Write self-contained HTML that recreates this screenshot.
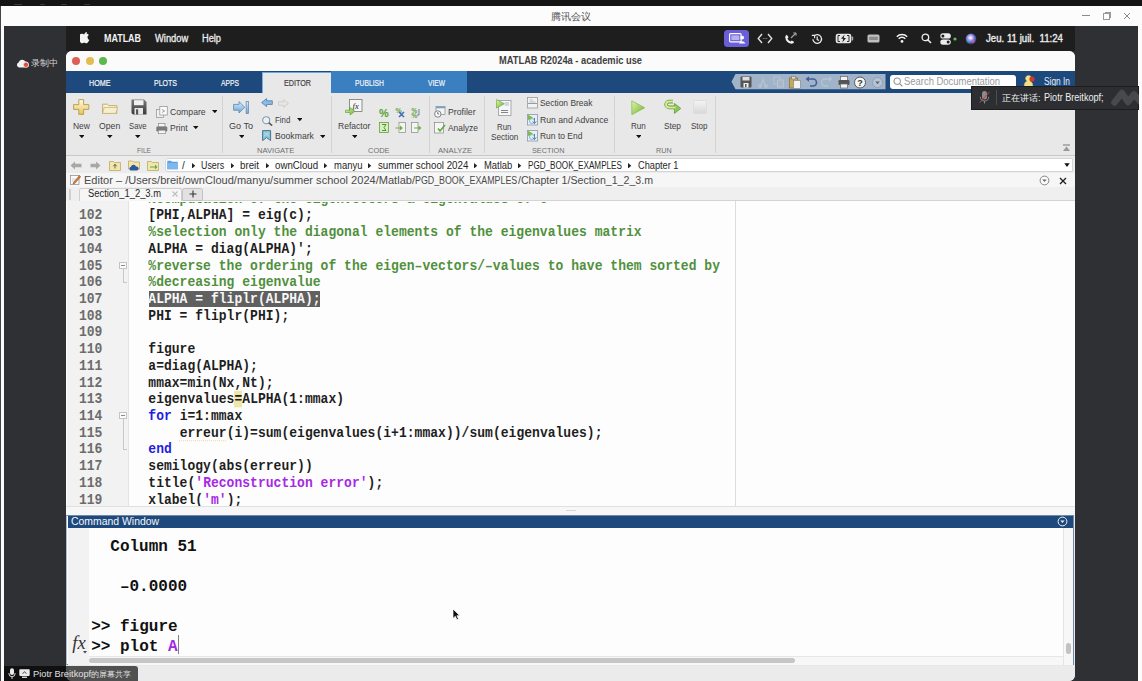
<!DOCTYPE html><html><head><meta charset="utf-8"><style>
*{margin:0;padding:0;box-sizing:border-box}
html,body{width:1142px;height:681px;overflow:hidden;background:#141414;position:relative}
.a{position:absolute}
</style></head><body><div class="a" style="left:0px;top:5.5px;width:1142px;height:675.5px;background:#fcfcfc;"></div>
<div class="a" style="left:0px;top:6px;width:1px;height:675px;background:#444;"></div>
<div class="a" style="left:14px;top:4.2px;width:8px;height:1.2px;background:#3a3a3a;border-radius:1px"></div>
<div class="a" style="left:40px;top:4.2px;width:5px;height:1.2px;background:#3a3a3a;border-radius:1px"></div>
<div class="a" style="left:61px;top:4.2px;width:6px;height:1.2px;background:#3a3a3a;border-radius:1px"></div>
<div class="a" style="left:84px;top:4.2px;width:6px;height:1.2px;background:#3a3a3a;border-radius:1px"></div>
<div class="a" style="left:550.50px;top:10.53px;font-family:'Liberation Sans',sans-serif;font-weight:normal;font-size:10px;line-height:12.00px;color:#555;white-space:pre;">腾讯会议</div>
<div class="a" style="left:1082px;top:15px;width:7.5px;height:1px;background:#8a8a8a;"></div>
<div class="a" style="left:1102.5px;top:13px;width:7px;height:6.5px;border:1px solid #999;background:#fcfcfc"></div>
<div class="a" style="left:1104.5px;top:11.5px;width:6.5px;height:6px;border-top:1px solid #999;border-right:1px solid #999"></div>
<svg class="a" style="left:1123px;top:12px;" width="8" height="8" viewBox="0 0 8 8"><path d="M1 1L7 7M7 1L1 7" stroke="#8a8a8a" stroke-width="1"/></svg>
<div class="a" style="left:4px;top:26.2px;width:1134px;height:654.8px;background:#2f3034;"></div>
<svg class="a" style="left:16px;top:58px;" width="14" height="11" viewBox="0 0 14 11"><path d="M3.2 9.6 A2.6 2.6 0 0 1 2.6 4.6 A3.6 3.6 0 0 1 9.3 3.6 A2.8 2.8 0 0 1 10.5 9.6Z" fill="#f4f4f4"/><circle cx="10" cy="6.8" r="2.5" fill="#e04a3c" stroke="#f4f4f4" stroke-width=".5"/></svg>
<div class="a" style="left:31.20px;top:58.37px;font-family:'Liberation Sans',sans-serif;font-weight:normal;font-size:8.9px;line-height:10.68px;color:#d4d4d4;white-space:pre;">录制中</div>
<div class="a" style="left:66px;top:26.2px;width:1009px;height:24.8px;background:#1e1e1e;"></div>
<svg class="a" style="left:80px;top:32.3px;" width="10" height="11.5" viewBox="0 0 10 11.5"><path d="M6.9 0.1c0.1 0.8-0.3 1.6-0.7 2.1-0.5 0.6-1.2 1-1.9 0.9-0.1-0.8 0.3-1.6 0.7-2.1 0.5-0.5 1.3-0.9 1.9-0.9zM9.3 8c-0.3 0.6-0.4 0.9-0.8 1.5-0.5 0.8-1.3 1.8-2.2 1.8-0.8 0-1-0.5-2.1-0.5-1.1 0-1.3 0.5-2.2 0.5-0.9 0-1.6-0.9-2.1-1.7-1.5-2.2-1.6-4.9-0.7-6.3 0.6-1 1.6-1.6 2.6-1.6 1 0 1.6 0.5 2.4 0.5 0.8 0 1.3-0.5 2.4-0.5 0.8 0 1.7 0.5 2.3 1.2-2 1.1-1.7 4 0.4 5.1z" fill="#f4f4f4"/></svg>
<div class="a" style="left:104.00px;top:33.13px;font-family:'Liberation Sans',sans-serif;font-weight:bold;font-size:10px;line-height:12.00px;color:#f2f2f2;white-space:pre;transform:scaleX(0.8922);transform-origin:0 0;">MATLAB</div>
<div class="a" style="left:155.00px;top:33.13px;font-family:'Liberation Sans',sans-serif;font-weight:normal;font-size:10px;line-height:12.00px;color:#ececec;white-space:pre;transform:scaleX(0.9334);transform-origin:0 0;-webkit-text-stroke:0.3px #ececec">Window</div>
<div class="a" style="left:202.40px;top:33.13px;font-family:'Liberation Sans',sans-serif;font-weight:normal;font-size:10px;line-height:12.00px;color:#ececec;white-space:pre;transform:scaleX(0.9238);transform-origin:0 0;-webkit-text-stroke:0.3px #ececec">Help</div>
<div class="a" style="left:723.7px;top:30px;width:25px;height:16.5px;background:#6a5fd8;border-radius:3.5px"></div>
<svg class="a" style="left:728.5px;top:33px;" width="17" height="11" viewBox="0 0 17 11"><rect x="0.6" y="0.6" width="11.5" height="8.3" rx="1" fill="none" stroke="#fff" stroke-width="1.2"/><rect x="2.4" y="2.4" width="7.9" height="4.7" fill="#b9b2f0"/><circle cx="13.2" cy="4.6" r="1.9" fill="#fff"/><path d="M9.8 10.6 Q13.2 5.8 16.6 10.6Z" fill="#fff"/></svg>
<svg class="a" style="left:756.5px;top:33px;" width="16" height="11" viewBox="0 0 16 11"><path d="M5 1L1.2 5.5L5 10M11 1L14.8 5.5L11 10" stroke="#e6e6e6" stroke-width="1.3" fill="none"/><circle cx="6.3" cy="5.5" r=".55" fill="#999"/><circle cx="8" cy="5.5" r=".55" fill="#999"/><circle cx="9.7" cy="5.5" r=".55" fill="#999"/></svg>
<svg class="a" style="left:784px;top:32px;" width="13" height="13" viewBox="0 0 13 13"><path d="M1.2 5.6 Q1.3 3.3 2.8 2.7 L4.6 5.2 L3.4 6.4 Q4.5 8.8 6.6 9.6 L7.8 8.4 L10.2 10.1 Q9.7 11.8 7.3 11.8 Q2 10.8 1.2 5.6Z" fill="#f0f0f0"/><path d="M7 6 L12 1" stroke="#a8a8a8" stroke-width="1.1"/><path d="M9.3 1H12V3.7" stroke="#a8a8a8" stroke-width="1" fill="none"/></svg>
<svg class="a" style="left:810.5px;top:32.5px;" width="12" height="12" viewBox="0 0 12 12"><path d="M1.9 6.2 A4.3 4.3 0 1 0 3.1 3" stroke="#ececec" stroke-width="1.3" fill="none"/><path d="M0.8 2.4 L3.6 2.4 L3.6 5.2" stroke="#ececec" stroke-width="1.1" fill="none"/><path d="M6.2 3.6 V6.6 L8 7.6" stroke="#ececec" stroke-width="1.2" fill="none"/></svg>
<svg class="a" style="left:834.5px;top:33px;" width="19" height="11" viewBox="0 0 19 11"><rect x="0.7" y="0.7" width="15.6" height="9.6" rx="2.2" fill="#e6e6e6"/><rect x="16.6" y="3.6" width="1.6" height="3.8" rx=".6" fill="#aaa"/><path d="M5 2.5 H3 V8.5 H5 M12 2.5 H14 V8.5 H12" stroke="#1e1e1e" stroke-width=".9" fill="none"/><path d="M9.6 1.6 L6 5.8 L8.3 5.8 L7.3 9.4 L11 5 L8.7 5Z" fill="#1e1e1e"/></svg>
<svg class="a" style="left:866.8px;top:34px;" width="13" height="9" viewBox="0 0 13 9"><rect x="0.5" y="0.5" width="12" height="8" rx="1.6" fill="#bfbfbf"/><rect x="2.2" y="2.8" width="8.6" height="3.2" rx=".5" fill="#8c8c8c"/></svg>
<svg class="a" style="left:895.8px;top:33px;" width="12" height="10" viewBox="0 0 12 10"><path d="M0.8 3.7 A7.4 7.4 0 0 1 11.2 3.7" stroke="#f2f2f2" stroke-width="1.5" fill="none"/><path d="M2.7 5.7 A4.6 4.6 0 0 1 9.3 5.7" stroke="#f2f2f2" stroke-width="1.5" fill="none"/><circle cx="6" cy="8.4" r="1.4" fill="#f2f2f2"/></svg>
<svg class="a" style="left:920.5px;top:33px;" width="11" height="11" viewBox="0 0 11 11"><circle cx="4.4" cy="4.4" r="3.3" stroke="#ececec" stroke-width="1.3" fill="none"/><path d="M6.8 6.8L10 10" stroke="#ececec" stroke-width="1.6"/></svg>
<svg class="a" style="left:939.5px;top:32.5px;" width="18" height="12" viewBox="0 0 18 12"><rect x="0.3" y="0.3" width="10.5" height="5.2" rx="2.6" fill="#ececec"/><rect x="0.3" y="6.5" width="10.5" height="5.2" rx="2.6" fill="#ececec"/><circle cx="2.9" cy="2.9" r="1.5" fill="#1e1e1e"/><circle cx="8.2" cy="9.1" r="1.5" fill="#1e1e1e"/><circle cx="15" cy="6" r="1.6" fill="#5cbf5a"/></svg>
<svg class="a" style="left:964.8px;top:32.5px;" width="12" height="12" viewBox="0 0 12 12"><defs><radialGradient id="sg" cx="45%" cy="40%" r="60%"><stop offset="0" stop-color="#fff"/><stop offset=".3" stop-color="#d8b8ee"/><stop offset=".65" stop-color="#5a6fd0"/><stop offset="1" stop-color="#2c3370"/></radialGradient></defs><circle cx="6" cy="6" r="5.4" fill="url(#sg)"/><circle cx="8" cy="8.2" r="2" fill="#e86090" opacity=".55"/><circle cx="3.8" cy="8" r="1.8" fill="#40c0d0" opacity=".55"/></svg>
<div class="a" style="left:986.00px;top:32.93px;font-family:'Liberation Sans',sans-serif;font-weight:normal;font-size:10px;line-height:12.00px;color:#ececec;white-space:pre;transform:scaleX(0.9663);transform-origin:0 0;-webkit-text-stroke:0.35px #ececec">Jeu. 11 juil.  11:24</div>
<div class="a" style="left:66px;top:51px;width:1009px;height:630px;background:#e9e8e9;border-radius:6px 6px 6px 6px;overflow:hidden"></div>
<div class="a" style="left:66px;top:51px;width:1009px;height:20px;background:#fbfbfb;border-radius:6px 6px 0 0"></div>
<div class="a" style="left:72.0px;top:57.2px;width:8.2px;height:8.2px;background:#dd5f58;border-radius:50%"></div>
<div class="a" style="left:85.7px;top:57.2px;width:8.2px;height:8.2px;background:#e4bd52;border-radius:50%"></div>
<div class="a" style="left:99.30000000000001px;top:57.2px;width:8.2px;height:8.2px;background:#5db84c;border-radius:50%"></div>
<div class="a" style="left:499.10px;top:54.83px;font-family:'Liberation Sans',sans-serif;font-weight:bold;font-size:10px;line-height:12.00px;color:#404040;white-space:pre;transform:scaleX(0.9300);transform-origin:0 0;">MATLAB R2024a - academic use</div>
<div class="a" style="left:66px;top:71px;width:1009px;height:21.5px;background:#1d497d;"></div>
<div class="a" style="left:331.3px;top:71px;width:136px;height:21.5px;background:#3a7fc0;"></div>
<div class="a" style="left:262.3px;top:72.4px;width:69px;height:20.3px;background:#e9e8e9;border-left:1px solid #79aee0;border-top:1px solid #6aa6e0"></div>
<div class="a" style="left:88.50px;top:77.88px;font-family:'Liberation Sans',sans-serif;font-weight:normal;font-size:9px;line-height:10.80px;color:#f4f6fa;white-space:pre;transform:scaleX(0.7963);transform-origin:0 0;-webkit-text-stroke:0.2px #f4f6fa">HOME</div>
<div class="a" style="left:154.00px;top:77.88px;font-family:'Liberation Sans',sans-serif;font-weight:normal;font-size:9px;line-height:10.80px;color:#f4f6fa;white-space:pre;transform:scaleX(0.7794);transform-origin:0 0;-webkit-text-stroke:0.2px #f4f6fa">PLOTS</div>
<div class="a" style="left:221.00px;top:77.88px;font-family:'Liberation Sans',sans-serif;font-weight:normal;font-size:9px;line-height:10.80px;color:#f4f6fa;white-space:pre;transform:scaleX(0.7496);transform-origin:0 0;-webkit-text-stroke:0.2px #f4f6fa">APPS</div>
<div class="a" style="left:283.50px;top:77.88px;font-family:'Liberation Sans',sans-serif;font-weight:normal;font-size:9px;line-height:10.80px;color:#444;white-space:pre;transform:scaleX(0.7979);transform-origin:0 0;-webkit-text-stroke:0.2px #444">EDITOR</div>
<div class="a" style="left:354.80px;top:77.88px;font-family:'Liberation Sans',sans-serif;font-weight:normal;font-size:9px;line-height:10.80px;color:#f4f6fa;white-space:pre;transform:scaleX(0.7504);transform-origin:0 0;-webkit-text-stroke:0.2px #f4f6fa">PUBLISH</div>
<div class="a" style="left:428.00px;top:77.88px;font-family:'Liberation Sans',sans-serif;font-weight:normal;font-size:9px;line-height:10.80px;color:#f4f6fa;white-space:pre;transform:scaleX(0.7391);transform-origin:0 0;-webkit-text-stroke:0.2px #f4f6fa">VIEW</div>
<svg class="a" style="left:730.5px;top:74px;" width="155" height="16" viewBox="0 0 155 16"><path d="M4.5 0 H154.5 V15.3 H4.5 L0.5 7.65Z" fill="#a0b3c8"/></svg>
<svg class="a" style="left:739.5px;top:76px;" width="13" height="13" viewBox="0 0 13 13"><rect x="0.5" y="0.5" width="11" height="11" rx="1" fill="#555"/><rect x="2.5" y="1" width="7" height="3.5" fill="#ddd"/><rect x="3.5" y="7" width="5" height="4.5" fill="#eee"/><rect x="5" y="8" width="1.5" height="3" fill="#555"/></svg>
<svg class="a" style="left:757px;top:76px;" width="13" height="13" viewBox="0 0 13 13"><path d="M3 11 L6 4 M9 11 L6 4 M6 4 V1" stroke="#b8c4d0" stroke-width="1.1" fill="none"/><circle cx="3" cy="10" r="1.5" fill="none" stroke="#b8c4d0"/><circle cx="9" cy="10" r="1.5" fill="none" stroke="#b8c4d0"/></svg>
<svg class="a" style="left:773px;top:76px;" width="13" height="13" viewBox="0 0 13 13"><rect x="1" y="1" width="6" height="7" fill="none" stroke="#b8c4d0"/><rect x="4.5" y="4" width="6" height="7" fill="#a8b8c8" stroke="#b8c4d0"/></svg>
<svg class="a" style="left:789px;top:75.5px;" width="13" height="13" viewBox="0 0 13 13"><rect x="0.5" y="2" width="8" height="10" fill="#c8a850" stroke="#8a7440" stroke-width=".8"/><rect x="2.5" y="0.5" width="4" height="2.5" fill="#ddd" stroke="#777" stroke-width=".6"/><rect x="4.5" y="4.5" width="7" height="8" fill="#f2f2f2" stroke="#888" stroke-width=".7"/></svg>
<svg class="a" style="left:805px;top:76px;" width="13" height="13" viewBox="0 0 13 13"><path d="M3 3 H8 A3.5 3.5 0 0 1 8 10 H5" stroke="#3d5f9a" stroke-width="1.6" fill="none"/><path d="M0.5 3 L4 0.3 V5.7Z" fill="#3d5f9a"/></svg>
<svg class="a" style="left:821px;top:76px;" width="13" height="13" viewBox="0 0 13 13"><path d="M9 3 H4 A3.5 3.5 0 0 0 4 10 H7" stroke="#b8c4d0" stroke-width="1.4" fill="none"/><path d="M11.5 3 L8 0.3 V5.7Z" fill="#b8c4d0"/></svg>
<svg class="a" style="left:838px;top:75.5px;" width="13" height="13" viewBox="0 0 13 13"><rect x="2.5" y="0.5" width="7" height="4" fill="#f4f4f4" stroke="#666" stroke-width=".7"/><rect x="0.5" y="4" width="11" height="5" rx="1" fill="#555"/><rect x="2.5" y="8" width="7" height="4" fill="#f4f4f4" stroke="#666" stroke-width=".7"/></svg>
<svg class="a" style="left:854px;top:75.5px;" width="13" height="13" viewBox="0 0 13 13"><circle cx="6" cy="6.5" r="5.5" fill="#f6f6f6" stroke="#555" stroke-width="1"/><text x="6" y="10" font-family="Liberation Sans" font-weight="bold" font-size="9" text-anchor="middle" fill="#333">?</text></svg>
<svg class="a" style="left:871.5px;top:76.5px;" width="13" height="13" viewBox="0 0 13 13"><circle cx="5.5" cy="5.5" r="5" fill="#b8c4d0" stroke="#8a98a8" stroke-width=".8"/><path d="M3.2 4.5 H7.8 L5.5 7.3Z" fill="#5a6878"/></svg>
<div class="a" style="left:890px;top:75px;width:126px;height:13.6px;background:#ffffff;border-radius:3px"></div>
<svg class="a" style="left:893px;top:77px;" width="10" height="10" viewBox="0 0 10 10"><circle cx="4.2" cy="4.2" r="3.3" stroke="#8a8a8a" stroke-width="1" fill="none"/><path d="M6.6 6.6L9.4 9.4" stroke="#8a8a8a" stroke-width="1.1"/></svg>
<div class="a" style="left:904.00px;top:76.13px;font-family:'Liberation Sans',sans-serif;font-weight:normal;font-size:10px;line-height:12.00px;color:#9a9a9a;white-space:pre;transform:scaleX(0.9437);transform-origin:0 0;">Search Documentation</div>
<svg class="a" style="left:1022px;top:74.5px;" width="14" height="13" viewBox="0 0 14 13"><path d="M2 12 Q2 7 5 6 A3 3 0 1 1 8 6 Q11 7 11 12Z" fill="#efe08a" stroke="#c8b050" stroke-width=".6"/><circle cx="10" cy="4" r="2.6" fill="#d03a2a"/></svg>
<div class="a" style="left:1043.50px;top:76.03px;font-family:'Liberation Sans',sans-serif;font-weight:normal;font-size:10px;line-height:12.00px;color:#e6edf6;white-space:pre;transform:scaleX(0.8351);transform-origin:0 0;">Sign In</div>
<div class="a" style="left:66px;top:92.5px;width:1009px;height:62px;background:#e9e8e9;"></div>
<div class="a" style="left:66px;top:154.5px;width:1009px;height:1px;background:#c8c8c8;"></div>
<div class="a" style="left:222.4px;top:96px;width:1px;height:57px;background:#d4d3d4;"></div>
<div class="a" style="left:331px;top:96px;width:1px;height:57px;background:#d4d3d4;"></div>
<div class="a" style="left:428.6px;top:96px;width:1px;height:57px;background:#d4d3d4;"></div>
<div class="a" style="left:484px;top:96px;width:1px;height:57px;background:#d4d3d4;"></div>
<div class="a" style="left:614.4px;top:96px;width:1px;height:57px;background:#d4d3d4;"></div>
<div class="a" style="left:715px;top:96px;width:1px;height:57px;background:#d4d3d4;"></div>
<div class="a" style="left:72.90px;top:121.35px;font-family:'Liberation Sans',sans-serif;font-weight:normal;font-size:8.4px;line-height:10.08px;color:#3e3e3e;white-space:pre;transform:scaleX(1.0116);transform-origin:0 0;">New</div>
<div class="a" style="left:99.30px;top:121.35px;font-family:'Liberation Sans',sans-serif;font-weight:normal;font-size:8.4px;line-height:10.08px;color:#3e3e3e;white-space:pre;transform:scaleX(1.0365);transform-origin:0 0;">Open</div>
<div class="a" style="left:129.40px;top:121.35px;font-family:'Liberation Sans',sans-serif;font-weight:normal;font-size:8.4px;line-height:10.08px;color:#3e3e3e;white-space:pre;transform:scaleX(0.9192);transform-origin:0 0;">Save</div>
<div class="a" style="left:170.00px;top:106.55px;font-family:'Liberation Sans',sans-serif;font-weight:normal;font-size:8.4px;line-height:10.08px;color:#3e3e3e;white-space:pre;transform:scaleX(1.0362);transform-origin:0 0;">Compare</div>
<div class="a" style="left:170.00px;top:123.15px;font-family:'Liberation Sans',sans-serif;font-weight:normal;font-size:8.4px;line-height:10.08px;color:#3e3e3e;white-space:pre;transform:scaleX(1.0248);transform-origin:0 0;">Print</div>
<div class="a" style="left:229.00px;top:121.35px;font-family:'Liberation Sans',sans-serif;font-weight:normal;font-size:8.4px;line-height:10.08px;color:#3e3e3e;white-space:pre;transform:scaleX(1.0782);transform-origin:0 0;">Go To</div>
<div class="a" style="left:275.30px;top:114.95px;font-family:'Liberation Sans',sans-serif;font-weight:normal;font-size:8.4px;line-height:10.08px;color:#3e3e3e;white-space:pre;transform:scaleX(0.9363);transform-origin:0 0;">Find</div>
<div class="a" style="left:275.40px;top:130.85px;font-family:'Liberation Sans',sans-serif;font-weight:normal;font-size:8.4px;line-height:10.08px;color:#3e3e3e;white-space:pre;transform:scaleX(1.0314);transform-origin:0 0;">Bookmark</div>
<div class="a" style="left:337.60px;top:121.35px;font-family:'Liberation Sans',sans-serif;font-weight:normal;font-size:8.4px;line-height:10.08px;color:#3e3e3e;white-space:pre;transform:scaleX(1.0206);transform-origin:0 0;">Refactor</div>
<div class="a" style="left:448.00px;top:106.55px;font-family:'Liberation Sans',sans-serif;font-weight:normal;font-size:8.4px;line-height:10.08px;color:#3e3e3e;white-space:pre;transform:scaleX(1.0410);transform-origin:0 0;">Profiler</div>
<div class="a" style="left:448.00px;top:123.15px;font-family:'Liberation Sans',sans-serif;font-weight:normal;font-size:8.4px;line-height:10.08px;color:#3e3e3e;white-space:pre;transform:scaleX(1.0038);transform-origin:0 0;">Analyze</div>
<div class="a" style="left:497.00px;top:121.55px;font-family:'Liberation Sans',sans-serif;font-weight:normal;font-size:8.4px;line-height:10.08px;color:#3e3e3e;white-space:pre;transform:scaleX(0.9345);transform-origin:0 0;">Run</div>
<div class="a" style="left:490.60px;top:132.15px;font-family:'Liberation Sans',sans-serif;font-weight:normal;font-size:8.4px;line-height:10.08px;color:#3e3e3e;white-space:pre;transform:scaleX(0.9779);transform-origin:0 0;">Section</div>
<div class="a" style="left:540.00px;top:98.25px;font-family:'Liberation Sans',sans-serif;font-weight:normal;font-size:8.4px;line-height:10.08px;color:#3e3e3e;white-space:pre;transform:scaleX(1.0039);transform-origin:0 0;">Section Break</div>
<div class="a" style="left:540.00px;top:114.85px;font-family:'Liberation Sans',sans-serif;font-weight:normal;font-size:8.4px;line-height:10.08px;color:#3e3e3e;white-space:pre;transform:scaleX(1.0344);transform-origin:0 0;">Run and Advance</div>
<div class="a" style="left:540.00px;top:131.25px;font-family:'Liberation Sans',sans-serif;font-weight:normal;font-size:8.4px;line-height:10.08px;color:#3e3e3e;white-space:pre;transform:scaleX(1.0112);transform-origin:0 0;">Run to End</div>
<div class="a" style="left:630.60px;top:121.35px;font-family:'Liberation Sans',sans-serif;font-weight:normal;font-size:8.4px;line-height:10.08px;color:#3e3e3e;white-space:pre;transform:scaleX(0.9669);transform-origin:0 0;">Run</div>
<div class="a" style="left:664.00px;top:121.35px;font-family:'Liberation Sans',sans-serif;font-weight:normal;font-size:8.4px;line-height:10.08px;color:#3e3e3e;white-space:pre;transform:scaleX(0.9838);transform-origin:0 0;">Step</div>
<div class="a" style="left:691.40px;top:121.35px;font-family:'Liberation Sans',sans-serif;font-weight:normal;font-size:8.4px;line-height:10.08px;color:#3e3e3e;white-space:pre;transform:scaleX(0.9606);transform-origin:0 0;">Stop</div>
<div class="a" style="left:136.60px;top:146.22px;font-family:'Liberation Sans',sans-serif;font-weight:normal;font-size:7.8px;line-height:9.36px;color:#6e6e6e;white-space:pre;transform:scaleX(0.8499);transform-origin:0 0;">FILE</div>
<div class="a" style="left:257.40px;top:146.22px;font-family:'Liberation Sans',sans-serif;font-weight:normal;font-size:7.8px;line-height:9.36px;color:#6e6e6e;white-space:pre;transform:scaleX(0.9743);transform-origin:0 0;">NAVIGATE</div>
<div class="a" style="left:368.00px;top:146.22px;font-family:'Liberation Sans',sans-serif;font-weight:normal;font-size:7.8px;line-height:9.36px;color:#6e6e6e;white-space:pre;transform:scaleX(0.9585);transform-origin:0 0;">CODE</div>
<div class="a" style="left:438.40px;top:146.22px;font-family:'Liberation Sans',sans-serif;font-weight:normal;font-size:7.8px;line-height:9.36px;color:#6e6e6e;white-space:pre;transform:scaleX(0.9752);transform-origin:0 0;">ANALYZE</div>
<div class="a" style="left:532.00px;top:146.22px;font-family:'Liberation Sans',sans-serif;font-weight:normal;font-size:7.8px;line-height:9.36px;color:#6e6e6e;white-space:pre;transform:scaleX(0.9374);transform-origin:0 0;">SECTION</div>
<div class="a" style="left:656.40px;top:146.22px;font-family:'Liberation Sans',sans-serif;font-weight:normal;font-size:7.8px;line-height:9.36px;color:#6e6e6e;white-space:pre;transform:scaleX(0.9231);transform-origin:0 0;">RUN</div>
<svg class="a" style="left:78.7px;top:135.0px;" width="5.6" height="3.2" viewBox="0 0 5.6 3.2"><path d="M0 0H5.6L2.8 3.2Z" fill="#111"/></svg>
<svg class="a" style="left:107.2px;top:135.0px;" width="5.6" height="3.2" viewBox="0 0 5.6 3.2"><path d="M0 0H5.6L2.8 3.2Z" fill="#111"/></svg>
<svg class="a" style="left:135.39999999999998px;top:135.0px;" width="5.6" height="3.2" viewBox="0 0 5.6 3.2"><path d="M0 0H5.6L2.8 3.2Z" fill="#111"/></svg>
<svg class="a" style="left:211.5px;top:109.9px;" width="5.6" height="3.2" viewBox="0 0 5.6 3.2"><path d="M0 0H5.6L2.8 3.2Z" fill="#111"/></svg>
<svg class="a" style="left:193.2px;top:126.0px;" width="5.6" height="3.2" viewBox="0 0 5.6 3.2"><path d="M0 0H5.6L2.8 3.2Z" fill="#111"/></svg>
<svg class="a" style="left:238.6px;top:135.0px;" width="5.6" height="3.2" viewBox="0 0 5.6 3.2"><path d="M0 0H5.6L2.8 3.2Z" fill="#111"/></svg>
<svg class="a" style="left:296.8px;top:118.4px;" width="5.6" height="3.2" viewBox="0 0 5.6 3.2"><path d="M0 0H5.6L2.8 3.2Z" fill="#111"/></svg>
<svg class="a" style="left:319.9px;top:134.6px;" width="5.6" height="3.2" viewBox="0 0 5.6 3.2"><path d="M0 0H5.6L2.8 3.2Z" fill="#111"/></svg>
<svg class="a" style="left:351.8px;top:135.0px;" width="5.6" height="3.2" viewBox="0 0 5.6 3.2"><path d="M0 0H5.6L2.8 3.2Z" fill="#111"/></svg>
<svg class="a" style="left:635.7px;top:135.0px;" width="5.6" height="3.2" viewBox="0 0 5.6 3.2"><path d="M0 0H5.6L2.8 3.2Z" fill="#111"/></svg>
<svg class="a" style="left:1062px;top:144px;" width="9" height="8" viewBox="0 0 9 8"><path d="M1 1H8" stroke="#777"/><path d="M4.5 2.5L8 7H1Z" fill="#999"/></svg>
<svg class="a" style="left:0;top:0" width="0" height="0"><defs>
<linearGradient id="gy" x1="0" y1="0" x2="0" y2="1"><stop offset="0" stop-color="#fffbe6"/><stop offset="1" stop-color="#e6c458"/></linearGradient>
<linearGradient id="gb" x1="0" y1="0" x2="0" y2="1"><stop offset="0" stop-color="#d8ecfa"/><stop offset="1" stop-color="#6fa6d8"/></linearGradient>
<linearGradient id="gg" x1="0" y1="0" x2="1" y2="1"><stop offset="0" stop-color="#e4f6a8"/><stop offset="1" stop-color="#6cb030"/></linearGradient>
<linearGradient id="gf" x1="0" y1="0" x2="0" y2="1"><stop offset="0" stop-color="#fbf6dc"/><stop offset="1" stop-color="#e8d890"/></linearGradient>
<linearGradient id="gd" x1="0" y1="0" x2="0" y2="1"><stop offset="0" stop-color="#7a7a7a"/><stop offset="1" stop-color="#3a3a3a"/></linearGradient>
<linearGradient id="gs" x1="0" y1="0" x2="0" y2="1"><stop offset="0" stop-color="#f4f4f4"/><stop offset="1" stop-color="#d8d8d8"/></linearGradient>
</defs></svg>
<svg class="a" style="left:73px;top:99.3px;" width="17" height="16" viewBox="0 0 17 16"><path d="M5.8 0.6H10.6V5.6H15.8V10.4H10.6V15.4H5.8V10.4H0.6V5.6H5.8Z" fill="url(#gy)" stroke="#b89a48" stroke-width=".9"/></svg>
<svg class="a" style="left:101.5px;top:102.5px;" width="16" height="11" viewBox="0 0 16 11"><path d="M0.6 1.2 H5.5 L7 2.6 H14.8 V10.4 H0.6Z" fill="url(#gf)" stroke="#b8a060" stroke-width=".8"/><path d="M0.6 10.4 L2.2 4.5 H15.4 L14 10.4Z" fill="#f6efcc" stroke="#c0a868" stroke-width=".6"/></svg>
<svg class="a" style="left:130.8px;top:99.3px;" width="16" height="16" viewBox="0 0 16 16"><path d="M0.5 0.5H13L15.5 3V15.5H2L0.5 14Z" fill="url(#gd)"/><rect x="3" y="1.2" width="9.5" height="5" fill="#f2f2f2"/><rect x="3.5" y="9" width="8.5" height="6.5" fill="#e8e8e8"/><rect x="5" y="10.3" width="2.2" height="5.2" fill="#555"/></svg>
<svg class="a" style="left:156.2px;top:105.5px;" width="12" height="12" viewBox="0 0 12 12"><rect x="0.5" y="3.5" width="7" height="8" fill="#f0f0f0" stroke="#9a9a9a" stroke-width=".8"/><rect x="3.8" y="0.5" width="7.5" height="8.5" fill="#fafafa" stroke="#9a9a9a" stroke-width=".8"/><path d="M6 3.5 L8.6 5 L6 6.5" stroke="#8a8a8a" stroke-width=".8" fill="none"/></svg>
<svg class="a" style="left:156.2px;top:122.8px;" width="11.5" height="11" viewBox="0 0 11.5 11"><rect x="2.5" y="0.5" width="6.5" height="3.5" fill="#f4f4f4" stroke="#888" stroke-width=".7"/><rect x="0.3" y="3.5" width="11" height="5" rx="1.2" fill="#7a7a7a"/><rect x="2.3" y="7.2" width="7" height="3.5" fill="#f6f6f6" stroke="#888" stroke-width=".7"/></svg>
<svg class="a" style="left:232.6px;top:101px;" width="16.5" height="13" viewBox="0 0 16.5 13"><path d="M0.6 3.4H6V0.6L11.8 6.3L6 12V9.2H0.6Z" fill="url(#gb)" stroke="#5a84b0" stroke-width=".8"/><rect x="13.1" y="0.4" width="2.4" height="12.2" fill="url(#gb)" stroke="#5a84b0" stroke-width=".7"/></svg>
<svg class="a" style="left:261.3px;top:98.4px;" width="12" height="10" viewBox="0 0 12 10"><path d="M0.6 4.6L5.6 0.6V2.8H11.3V6.4H5.6V8.6Z" fill="#8cbce6" stroke="#4a7aa8" stroke-width=".8"/></svg>
<svg class="a" style="left:277.8px;top:98.6px;" width="11" height="9.5" viewBox="0 0 11 9.5"><path d="M10.4 4.5L5.6 0.5V2.7H0.5V6.3H5.6V8.5Z" fill="#e6e6e6" stroke="#c8c8c8" stroke-width=".8"/></svg>
<svg class="a" style="left:262px;top:115.5px;" width="11" height="10" viewBox="0 0 11 10"><circle cx="4.2" cy="4.2" r="3.5" fill="#e8f0f8" stroke="#8a98a8" stroke-width="1.1"/><path d="M6.8 6.8L10.2 9.6" stroke="#555" stroke-width="1.6"/></svg>
<svg class="a" style="left:262px;top:130.3px;" width="9.5" height="11.2" viewBox="0 0 9.5 11.2"><path d="M0.6 0.6H8.6V10.6L4.6 7.6L0.6 10.6Z" fill="#8cc4d8" stroke="#3a6a88" stroke-width=".9"/><path d="M2 2.5 L7 6 M7 2.5 L2 6" stroke="#c8e8f0" stroke-width=".7"/></svg>
<svg class="a" style="left:345px;top:98.5px;" width="18" height="17" viewBox="0 0 18 17"><rect x="4.5" y="0.5" width="12.5" height="12" fill="#f6f6f6" stroke="#777" stroke-width=".8"/><text x="10.6" y="9.6" font-family="Liberation Serif" font-style="italic" font-size="8.5" text-anchor="middle" fill="#222">fx</text><path d="M0.5 11.2H5V8.5L10 12.3L5 16V13.5H0.5Z" fill="url(#gg)" stroke="#5a9a30" stroke-width=".6"/></svg>
<svg class="a" style="left:379px;top:106.5px;" width="10" height="11" viewBox="0 0 10 11"><text x="5" y="9.5" font-family="Liberation Sans" font-weight="bold" font-size="11" text-anchor="middle" fill="#50a030">%</text></svg>
<svg class="a" style="left:395px;top:106.5px;" width="10" height="11" viewBox="0 0 10 11"><text x="3.5" y="6" font-family="Liberation Sans" font-weight="bold" font-size="7" text-anchor="middle" fill="#60a040">%</text><path d="M4 5 L9 10 M9 5 L4 10" stroke="#4070b0" stroke-width="1.6"/></svg>
<svg class="a" style="left:411px;top:106.5px;" width="11" height="11" viewBox="0 0 11 11"><text x="3.5" y="6" font-family="Liberation Sans" font-weight="bold" font-size="6.5" text-anchor="middle" fill="#60a040">%</text><text x="3.5" y="11" font-family="Liberation Sans" font-weight="bold" font-size="6.5" text-anchor="middle" fill="#60a040">%</text><path d="M8 2V8H6" stroke="#666" stroke-width=".8" fill="none"/></svg>
<svg class="a" style="left:379px;top:122.4px;" width="10" height="11" viewBox="0 0 10 11"><rect x="0.5" y="0.5" width="9" height="10" fill="#d8f0c0" stroke="#6aa040" stroke-width=".8"/><path d="M3 2.5 H7 L5 5.5 L7 8.5 H3" stroke="#4a8a30" stroke-width=".9" fill="none"/></svg>
<svg class="a" style="left:395px;top:122.4px;" width="11" height="11" viewBox="0 0 11 11"><rect x="4" y="0.5" width="6.5" height="10" fill="#f4f4f4" stroke="#888" stroke-width=".7"/><path d="M0.5 5.5H5V3.5L8 6L5 8.5V6.5H0.5Z" fill="#70b040"/></svg>
<svg class="a" style="left:411px;top:122.4px;" width="11" height="11" viewBox="0 0 11 11"><rect x="0.5" y="0.5" width="6.5" height="10" fill="#f4f4f4" stroke="#888" stroke-width=".7"/><path d="M3 5.5H7.5V3.5L10.5 6L7.5 8.5V6.5H3Z" fill="#70b040"/></svg>
<svg class="a" style="left:434px;top:105.5px;" width="11.5" height="12" viewBox="0 0 11.5 12"><rect x="2" y="0.5" width="9" height="8" fill="#f4f4f4" stroke="#888" stroke-width=".7"/><rect x="2" y="0.5" width="9" height="1.8" fill="#7aa0c8"/><circle cx="3.8" cy="8" r="3.2" fill="#fafafa" stroke="#666" stroke-width=".8"/><path d="M3.8 6V8H5.2" stroke="#444" stroke-width=".7" fill="none"/></svg>
<svg class="a" style="left:434px;top:122.2px;" width="11.5" height="11.5" viewBox="0 0 11.5 11.5"><rect x="0.5" y="0.5" width="9" height="10.5" fill="#f6f6f6" stroke="#888" stroke-width=".7"/><path d="M4 6.5 L6 9 L11 3" stroke="#60a838" stroke-width="1.6" fill="none"/></svg>
<svg class="a" style="left:495.5px;top:98.8px;" width="16" height="17" viewBox="0 0 16 17"><rect x="2.5" y="1.5" width="12.5" height="15" fill="#f4f6f8" stroke="#999" stroke-width=".8"/><path d="M5 11.5H12M5 13.5H12" stroke="#666" stroke-width=".8"/><path d="M0.5 0.5 L8.5 4.8 L0.5 9Z" fill="url(#gg)" stroke="#4a9a2a" stroke-width=".5"/><path d="M9 4 H13 M9 6H13" stroke="#8aa0b8" stroke-width=".7"/></svg>
<svg class="a" style="left:526.5px;top:97.2px;" width="11" height="11.5" viewBox="0 0 11 11.5"><rect x="0.5" y="0.5" width="10" height="10.5" fill="#f2f2f2" stroke="#999" stroke-width=".8"/><path d="M2.5 3H6 M2.5 5H8.5" stroke="#aaa" stroke-width=".7"/><path d="M1 6.5H10" stroke="#6a8ab0" stroke-width=".8"/></svg>
<svg class="a" style="left:526.5px;top:114px;" width="11" height="11.5" viewBox="0 0 11 11.5"><rect x="0.5" y="0.5" width="10" height="10.5" fill="#e8eef4" stroke="#8a9aaa" stroke-width=".8"/><path d="M1 0.8 L6 3.5 L1 6.2Z" fill="#7ac040"/><path d="M7.5 4 V9 M5.8 7.5 L7.5 9.5 L9.2 7.5" stroke="#4a7ab0" stroke-width="1" fill="none"/><circle cx="5" cy="7" r="2.5" fill="none" stroke="#6a9ad0" stroke-width=".7"/></svg>
<svg class="a" style="left:526.5px;top:130.4px;" width="11" height="11.5" viewBox="0 0 11 11.5"><rect x="0.5" y="0.5" width="10" height="10.5" fill="#e8eef4" stroke="#8a9aaa" stroke-width=".8"/><path d="M1 0.8 L6 3.5 L1 6.2Z" fill="#7ac040"/><path d="M7.5 4 V9 M5.8 7.5 L7.5 9.5 L9.2 7.5" stroke="#4a7ab0" stroke-width="1" fill="none"/><circle cx="5" cy="7" r="2.5" fill="none" stroke="#6a9ad0" stroke-width=".7"/></svg>
<svg class="a" style="left:631.3px;top:99.5px;" width="14.5" height="15.5" viewBox="0 0 14.5 15.5"><path d="M0.8 0.8 L13.7 7.75 L0.8 14.7Z" fill="url(#gg)" stroke="#7ab848" stroke-width=".7"/></svg>
<svg class="a" style="left:664px;top:99px;" width="18" height="16" viewBox="0 0 18 16"><path d="M9 2.6 H5.2 A3.1 2.9 0 0 0 5.2 8.4 H11" stroke="#6a9a40" stroke-width="3.6" fill="none"/><path d="M10.4 4.4 L16.8 9.4 L10.4 14.4Z" fill="#8cc850" stroke="#6a9a40" stroke-width=".8" stroke-linejoin="round"/><path d="M9 2.6 H5.2 A3.1 2.9 0 0 0 5.2 8.4 H11.5" stroke="#d4ee90" stroke-width="2" fill="none"/></svg>
<svg class="a" style="left:693.3px;top:100px;" width="14" height="14" viewBox="0 0 14 14"><rect x="0.5" y="0.5" width="13" height="13" rx="1.5" fill="url(#gs)" stroke="#dadada" stroke-width=".8"/></svg>
<div class="a" style="left:66px;top:155.5px;width:1009px;height:17.5px;background:#ececec;"></div>
<div class="a" style="left:165px;top:157.8px;width:908px;height:14.6px;background:#ffffff;border:1px solid #d6d6d6;border-radius:3px 0 0 3px"></div>
<svg class="a" style="left:70.3px;top:160.5px;" width="12" height="9" viewBox="0 0 12 9"><path d="M0.5 4.5L5 0.5V2.8H11.5V6.2H5V8.5Z" fill="#a8a8a8"/></svg>
<svg class="a" style="left:89.5px;top:160.5px;" width="11" height="9" viewBox="0 0 11 9"><path d="M10.5 4.5L6 0.5V2.8H0.5V6.2H6V8.5Z" fill="#a8a8a8"/></svg>
<svg class="a" style="left:109px;top:159.5px;" width="12" height="11" viewBox="0 0 12 11"><path d="M0.5 1.5H4.5L5.5 2.5H11.5V10.5H0.5Z" fill="#f2e6a8" stroke="#b8a060" stroke-width=".7"/><path d="M6 8.5V4.5M4.3 6.2L6 4.3L7.7 6.2" stroke="#555" stroke-width=".9" fill="none"/></svg>
<svg class="a" style="left:128px;top:159px;" width="12" height="12" viewBox="0 0 12 12"><path d="M0.5 2H4.5L5.5 3H11.5V10H0.5Z" fill="#f2e6a8" stroke="#b8a060" stroke-width=".7"/><path d="M2.5 11.5 A2 2 0 0 1 3 7.8 A2.6 2.6 0 0 1 8 7.5 A2 2 0 0 1 9 11.5Z" fill="#2a5aa0"/></svg>
<svg class="a" style="left:147.4px;top:159.5px;" width="12" height="11" viewBox="0 0 12 11"><path d="M0.5 1.5H4.5L5.5 2.5H11.5V10.5H0.5Z" fill="#f2e6a8" stroke="#b8a060" stroke-width=".7"/><path d="M3 6.5H8V4.5L10.5 7L8 9.5V7.5H3Z" fill="#5ab040"/></svg>
<svg class="a" style="left:167px;top:160px;" width="11" height="9.5" viewBox="0 0 11 9.5"><path d="M0.3 0.8H4L5 1.8H10.7V9.2H0.3Z" fill="#5ca0e0"/><path d="M0.3 3H10.7V9.2H0.3Z" fill="#7ab8ee"/></svg>
<div class="a" style="left:182.00px;top:159.53px;font-family:'Liberation Sans',sans-serif;font-weight:normal;font-size:10px;line-height:12.00px;color:#262626;white-space:pre;">/</div>
<svg class="a" style="left:191.7px;top:162.6px;" width="3.5" height="5.5" viewBox="0 0 3.5 5.5"><path d="M0 0L3.2 2.75L0 5.5Z" fill="#222"/></svg>
<svg class="a" style="left:231.1px;top:162.6px;" width="3.5" height="5.5" viewBox="0 0 3.5 5.5"><path d="M0 0L3.2 2.75L0 5.5Z" fill="#222"/></svg>
<svg class="a" style="left:265.8px;top:162.6px;" width="3.5" height="5.5" viewBox="0 0 3.5 5.5"><path d="M0 0L3.2 2.75L0 5.5Z" fill="#222"/></svg>
<svg class="a" style="left:324.3px;top:162.6px;" width="3.5" height="5.5" viewBox="0 0 3.5 5.5"><path d="M0 0L3.2 2.75L0 5.5Z" fill="#222"/></svg>
<svg class="a" style="left:368.2px;top:162.6px;" width="3.5" height="5.5" viewBox="0 0 3.5 5.5"><path d="M0 0L3.2 2.75L0 5.5Z" fill="#222"/></svg>
<svg class="a" style="left:474.4px;top:162.6px;" width="3.5" height="5.5" viewBox="0 0 3.5 5.5"><path d="M0 0L3.2 2.75L0 5.5Z" fill="#222"/></svg>
<svg class="a" style="left:518.3px;top:162.6px;" width="3.5" height="5.5" viewBox="0 0 3.5 5.5"><path d="M0 0L3.2 2.75L0 5.5Z" fill="#222"/></svg>
<svg class="a" style="left:627.8px;top:162.6px;" width="3.5" height="5.5" viewBox="0 0 3.5 5.5"><path d="M0 0L3.2 2.75L0 5.5Z" fill="#222"/></svg>
<div class="a" style="left:200.80px;top:159.53px;font-family:'Liberation Sans',sans-serif;font-weight:normal;font-size:10px;line-height:12.00px;color:#262626;white-space:pre;transform:scaleX(0.8884);transform-origin:0 0;">Users</div>
<div class="a" style="left:240.30px;top:159.53px;font-family:'Liberation Sans',sans-serif;font-weight:normal;font-size:10px;line-height:12.00px;color:#262626;white-space:pre;transform:scaleX(0.9767);transform-origin:0 0;">breit</div>
<div class="a" style="left:274.70px;top:159.53px;font-family:'Liberation Sans',sans-serif;font-weight:normal;font-size:10px;line-height:12.00px;color:#262626;white-space:pre;transform:scaleX(0.9691);transform-origin:0 0;">ownCloud</div>
<div class="a" style="left:333.50px;top:159.53px;font-family:'Liberation Sans',sans-serif;font-weight:normal;font-size:10px;line-height:12.00px;color:#262626;white-space:pre;transform:scaleX(0.9462);transform-origin:0 0;">manyu</div>
<div class="a" style="left:377.70px;top:159.53px;font-family:'Liberation Sans',sans-serif;font-weight:normal;font-size:10px;line-height:12.00px;color:#262626;white-space:pre;transform:scaleX(0.9728);transform-origin:0 0;">summer school 2024</div>
<div class="a" style="left:483.70px;top:159.53px;font-family:'Liberation Sans',sans-serif;font-weight:normal;font-size:10px;line-height:12.00px;color:#262626;white-space:pre;transform:scaleX(0.9428);transform-origin:0 0;">Matlab</div>
<div class="a" style="left:527.80px;top:159.53px;font-family:'Liberation Sans',sans-serif;font-weight:normal;font-size:10px;line-height:12.00px;color:#262626;white-space:pre;transform:scaleX(0.8123);transform-origin:0 0;">PGD_BOOK_EXAMPLES</div>
<div class="a" style="left:637.50px;top:159.53px;font-family:'Liberation Sans',sans-serif;font-weight:normal;font-size:10px;line-height:12.00px;color:#262626;white-space:pre;transform:scaleX(0.9222);transform-origin:0 0;">Chapter 1</div>
<svg class="a" style="left:1064px;top:162.8px;" width="6" height="4.5" viewBox="0 0 6 4.5"><path d="M0.3 0.3H5.7L3 4Z" fill="#111"/></svg>
<div class="a" style="left:66px;top:173px;width:1009px;height:14px;background:#f6f6f6;"></div>
<div class="a" style="left:66px;top:186.5px;width:1009px;height:0.8px;background:#d8d8d8;"></div>
<svg class="a" style="left:69.5px;top:174.3px;" width="11" height="11" viewBox="0 0 11 11"><rect x="0.5" y="1.5" width="8.5" height="9" fill="#fafafa" stroke="#888" stroke-width=".7"/><path d="M2 7 H5 M2 5 H6" stroke="#bbb" stroke-width=".6"/><path d="M3.5 8.5 L9.5 1.5 L10.7 2.7 L4.7 9.5 L3 10Z" fill="#e07a30" stroke="#804020" stroke-width=".5"/></svg>
<div class="a" style="left:83.50px;top:174.53px;font-family:'Liberation Sans',sans-serif;font-weight:normal;font-size:10px;line-height:12.00px;color:#4a4a4a;white-space:pre;transform:scaleX(1.1049);transform-origin:0 0;">Editor – /Users/breit/ownCloud/manyu/summer school 2024/Matlab/</div>
<div class="a" style="left:415.40px;top:174.53px;font-family:'Liberation Sans',sans-serif;font-weight:normal;font-size:10px;line-height:12.00px;color:#4a4a4a;white-space:pre;transform:scaleX(0.8840);transform-origin:0 0;">PGD_BOOK_EXAMPLES</div>
<div class="a" style="left:518.20px;top:174.53px;font-family:'Liberation Sans',sans-serif;font-weight:normal;font-size:10px;line-height:12.00px;color:#4a4a4a;white-space:pre;transform:scaleX(1.0604);transform-origin:0 0;">/Chapter 1/Section_1_2_3.m</div>
<svg class="a" style="left:1038.5px;top:175px;" width="11" height="11" viewBox="0 0 11 11"><circle cx="5.5" cy="5.5" r="4.4" stroke="#777" stroke-width=".9" fill="#fafafa"/><path d="M3.3 4.4h4.4l-2.2 2.7z" fill="#666"/></svg>
<svg class="a" style="left:1059px;top:177px;" width="8" height="8" viewBox="0 0 8 8"><path d="M1 1L7 7M7 1L1 7" stroke="#1e1e1e" stroke-width="1.3"/></svg>
<div class="a" style="left:66px;top:187.3px;width:1009px;height:13.7px;background:#efefef;"></div>
<div class="a" style="left:203px;top:200px;width:872px;height:1px;background:#d4d4d4;"></div>
<div class="a" style="left:68.5px;top:189px;width:2.5px;height:11px;background:#d0d0d0;"></div>
<div class="a" style="left:79px;top:187.8px;width:102.6px;height:13.2px;background:#f6f6f6;border:1px solid #cfcfcf;border-bottom:none;border-radius:2.5px 2.5px 0 0"></div>
<div class="a" style="left:88.40px;top:187.93px;font-family:'Liberation Sans',sans-serif;font-weight:normal;font-size:10px;line-height:12.00px;color:#262626;white-space:pre;transform:scaleX(0.9379);transform-origin:0 0;">Section_1_2_3.m</div>
<svg class="a" style="left:171.7px;top:191.3px;" width="6" height="6" viewBox="0 0 6 6"><path d="M0.5 0.5L5.5 5.5M5.5 0.5L0.5 5.5" stroke="#bdbdbd" stroke-width="1.1"/></svg>
<div class="a" style="left:181.8px;top:187.5px;width:21.5px;height:13.5px;background:#e2e2e2;border:1px solid #c2c2c2;border-radius:2.5px 2.5px 0 0"></div>
<svg class="a" style="left:189px;top:190.3px;" width="8" height="8" viewBox="0 0 8 8"><path d="M4 0.5V7.5M0.5 4H7.5" stroke="#333" stroke-width="1.1"/></svg>
<div class="a" style="left:66px;top:201px;width:1009px;height:304.5px;background:#fdfdfd;"></div>
<div class="a" style="left:67px;top:201px;width:61px;height:304.5px;background:#f2f2f2;"></div>
<div class="a" style="left:128px;top:201px;width:1px;height:304.5px;background:#e4e4e4;"></div>
<div class="a" style="left:735px;top:201px;width:1px;height:304.5px;background:#dddddd;"></div>
<div class="a" style="left:148.7px;top:291.4px;width:171.7px;height:15.3px;background:#606060;"></div>
<div class="a" style="left:66px;top:202px;width:1009px;height:303.5px;overflow:hidden">
<div class="a" style="left:82.3px;top:-10.38px;font-family:'Liberation Mono',monospace;font-weight:bold;font-size:13px;letter-spacing:0.03px;line-height:16px;color:#1e1e1e;white-space:pre;transform:scaleY(1.1);transform-origin:0 11.46px"><span style="color:#50903c">%computation of the eigenvectors &amp; eigenvalues of c</span></div>
<div class="a" style="left:13px;top:6.34px;font-family:'Liberation Mono',monospace;font-weight:bold;font-size:13px;line-height:16px;color:#6c6c6c;transform:scaleY(1.1);transform-origin:0 11.46px">102</div>
<div class="a" style="left:82.3px;top:6.34px;font-family:'Liberation Mono',monospace;font-weight:bold;font-size:13px;letter-spacing:0.03px;line-height:16px;color:#1e1e1e;white-space:pre;transform:scaleY(1.1);transform-origin:0 11.46px">[PHI,ALPHA] = eig(c);</div>
<div class="a" style="left:13px;top:23.06px;font-family:'Liberation Mono',monospace;font-weight:bold;font-size:13px;line-height:16px;color:#6c6c6c;transform:scaleY(1.1);transform-origin:0 11.46px">103</div>
<div class="a" style="left:82.3px;top:23.06px;font-family:'Liberation Mono',monospace;font-weight:bold;font-size:13px;letter-spacing:0.03px;line-height:16px;color:#1e1e1e;white-space:pre;transform:scaleY(1.1);transform-origin:0 11.46px"><span style="color:#50903c">%selection only the diagonal elements of the eigenvalues matrix</span></div>
<div class="a" style="left:13px;top:39.78px;font-family:'Liberation Mono',monospace;font-weight:bold;font-size:13px;line-height:16px;color:#6c6c6c;transform:scaleY(1.1);transform-origin:0 11.46px">104</div>
<div class="a" style="left:82.3px;top:39.78px;font-family:'Liberation Mono',monospace;font-weight:bold;font-size:13px;letter-spacing:0.03px;line-height:16px;color:#1e1e1e;white-space:pre;transform:scaleY(1.1);transform-origin:0 11.46px">ALPHA = diag(ALPHA)&#x27;;</div>
<div class="a" style="left:13px;top:56.50px;font-family:'Liberation Mono',monospace;font-weight:bold;font-size:13px;line-height:16px;color:#6c6c6c;transform:scaleY(1.1);transform-origin:0 11.46px">105</div>
<div class="a" style="left:82.3px;top:56.50px;font-family:'Liberation Mono',monospace;font-weight:bold;font-size:13px;letter-spacing:0.03px;line-height:16px;color:#1e1e1e;white-space:pre;transform:scaleY(1.1);transform-origin:0 11.46px"><span style="color:#50903c">%reverse the ordering of the eigen–vectors/–values to have them sorted by</span></div>
<div class="a" style="left:13px;top:73.22px;font-family:'Liberation Mono',monospace;font-weight:bold;font-size:13px;line-height:16px;color:#6c6c6c;transform:scaleY(1.1);transform-origin:0 11.46px">106</div>
<div class="a" style="left:82.3px;top:73.22px;font-family:'Liberation Mono',monospace;font-weight:bold;font-size:13px;letter-spacing:0.03px;line-height:16px;color:#1e1e1e;white-space:pre;transform:scaleY(1.1);transform-origin:0 11.46px"><span style="color:#50903c">%decreasing eigenvalue</span></div>
<div class="a" style="left:13px;top:89.94px;font-family:'Liberation Mono',monospace;font-weight:bold;font-size:13px;line-height:16px;color:#6c6c6c;transform:scaleY(1.1);transform-origin:0 11.46px">107</div>
<div class="a" style="left:82.3px;top:89.94px;font-family:'Liberation Mono',monospace;font-weight:bold;font-size:13px;letter-spacing:0.03px;line-height:16px;color:#1e1e1e;white-space:pre;transform:scaleY(1.1);transform-origin:0 11.46px"><span style="color:#f6f6f6">ALPHA = fliplr(ALPHA);</span></div>
<div class="a" style="left:13px;top:106.66px;font-family:'Liberation Mono',monospace;font-weight:bold;font-size:13px;line-height:16px;color:#6c6c6c;transform:scaleY(1.1);transform-origin:0 11.46px">108</div>
<div class="a" style="left:82.3px;top:106.66px;font-family:'Liberation Mono',monospace;font-weight:bold;font-size:13px;letter-spacing:0.03px;line-height:16px;color:#1e1e1e;white-space:pre;transform:scaleY(1.1);transform-origin:0 11.46px">PHI = fliplr(PHI);</div>
<div class="a" style="left:13px;top:123.38px;font-family:'Liberation Mono',monospace;font-weight:bold;font-size:13px;line-height:16px;color:#6c6c6c;transform:scaleY(1.1);transform-origin:0 11.46px">109</div>
<div class="a" style="left:82.3px;top:123.38px;font-family:'Liberation Mono',monospace;font-weight:bold;font-size:13px;letter-spacing:0.03px;line-height:16px;color:#1e1e1e;white-space:pre;transform:scaleY(1.1);transform-origin:0 11.46px"></div>
<div class="a" style="left:13px;top:140.10px;font-family:'Liberation Mono',monospace;font-weight:bold;font-size:13px;line-height:16px;color:#6c6c6c;transform:scaleY(1.1);transform-origin:0 11.46px">110</div>
<div class="a" style="left:82.3px;top:140.10px;font-family:'Liberation Mono',monospace;font-weight:bold;font-size:13px;letter-spacing:0.03px;line-height:16px;color:#1e1e1e;white-space:pre;transform:scaleY(1.1);transform-origin:0 11.46px">figure</div>
<div class="a" style="left:13px;top:156.82px;font-family:'Liberation Mono',monospace;font-weight:bold;font-size:13px;line-height:16px;color:#6c6c6c;transform:scaleY(1.1);transform-origin:0 11.46px">111</div>
<div class="a" style="left:82.3px;top:156.82px;font-family:'Liberation Mono',monospace;font-weight:bold;font-size:13px;letter-spacing:0.03px;line-height:16px;color:#1e1e1e;white-space:pre;transform:scaleY(1.1);transform-origin:0 11.46px">a=diag(ALPHA);</div>
<div class="a" style="left:13px;top:173.54px;font-family:'Liberation Mono',monospace;font-weight:bold;font-size:13px;line-height:16px;color:#6c6c6c;transform:scaleY(1.1);transform-origin:0 11.46px">112</div>
<div class="a" style="left:82.3px;top:173.54px;font-family:'Liberation Mono',monospace;font-weight:bold;font-size:13px;letter-spacing:0.03px;line-height:16px;color:#1e1e1e;white-space:pre;transform:scaleY(1.1);transform-origin:0 11.46px">mmax=min(Nx,Nt);</div>
<div class="a" style="left:13px;top:190.26px;font-family:'Liberation Mono',monospace;font-weight:bold;font-size:13px;line-height:16px;color:#6c6c6c;transform:scaleY(1.1);transform-origin:0 11.46px">113</div>
<div class="a" style="left:82.3px;top:190.26px;font-family:'Liberation Mono',monospace;font-weight:bold;font-size:13px;letter-spacing:0.03px;line-height:16px;color:#1e1e1e;white-space:pre;transform:scaleY(1.1);transform-origin:0 11.46px">eigenvalues<span style="background:#efe6a8">=</span>ALPHA(1:mmax)</div>
<div class="a" style="left:13px;top:206.98px;font-family:'Liberation Mono',monospace;font-weight:bold;font-size:13px;line-height:16px;color:#6c6c6c;transform:scaleY(1.1);transform-origin:0 11.46px">114</div>
<div class="a" style="left:82.3px;top:206.98px;font-family:'Liberation Mono',monospace;font-weight:bold;font-size:13px;letter-spacing:0.03px;line-height:16px;color:#1e1e1e;white-space:pre;transform:scaleY(1.1);transform-origin:0 11.46px"><span style="color:#1f1ee0">for</span> i=1:mmax</div>
<div class="a" style="left:13px;top:223.70px;font-family:'Liberation Mono',monospace;font-weight:bold;font-size:13px;line-height:16px;color:#6c6c6c;transform:scaleY(1.1);transform-origin:0 11.46px">115</div>
<div class="a" style="left:82.3px;top:223.70px;font-family:'Liberation Mono',monospace;font-weight:bold;font-size:13px;letter-spacing:0.03px;line-height:16px;color:#1e1e1e;white-space:pre;transform:scaleY(1.1);transform-origin:0 11.46px">    <span style="text-decoration:underline dotted #efd890;text-decoration-thickness:1px;text-underline-offset:2.5px">erreur</span>(i)=sum(eigenvalues(i+1:mmax))/sum(eigenvalues);</div>
<div class="a" style="left:13px;top:240.42px;font-family:'Liberation Mono',monospace;font-weight:bold;font-size:13px;line-height:16px;color:#6c6c6c;transform:scaleY(1.1);transform-origin:0 11.46px">116</div>
<div class="a" style="left:82.3px;top:240.42px;font-family:'Liberation Mono',monospace;font-weight:bold;font-size:13px;letter-spacing:0.03px;line-height:16px;color:#1e1e1e;white-space:pre;transform:scaleY(1.1);transform-origin:0 11.46px"><span style="color:#1f1ee0">end</span></div>
<div class="a" style="left:13px;top:257.14px;font-family:'Liberation Mono',monospace;font-weight:bold;font-size:13px;line-height:16px;color:#6c6c6c;transform:scaleY(1.1);transform-origin:0 11.46px">117</div>
<div class="a" style="left:82.3px;top:257.14px;font-family:'Liberation Mono',monospace;font-weight:bold;font-size:13px;letter-spacing:0.03px;line-height:16px;color:#1e1e1e;white-space:pre;transform:scaleY(1.1);transform-origin:0 11.46px">semilogy(abs(erreur))</div>
<div class="a" style="left:13px;top:273.86px;font-family:'Liberation Mono',monospace;font-weight:bold;font-size:13px;line-height:16px;color:#6c6c6c;transform:scaleY(1.1);transform-origin:0 11.46px">118</div>
<div class="a" style="left:82.3px;top:273.86px;font-family:'Liberation Mono',monospace;font-weight:bold;font-size:13px;letter-spacing:0.03px;line-height:16px;color:#1e1e1e;white-space:pre;transform:scaleY(1.1);transform-origin:0 11.46px">title(<span style="color:#a628e6">&#x27;Reconstruction error&#x27;</span>);</div>
<div class="a" style="left:13px;top:290.58px;font-family:'Liberation Mono',monospace;font-weight:bold;font-size:13px;line-height:16px;color:#6c6c6c;transform:scaleY(1.1);transform-origin:0 11.46px">119</div>
<div class="a" style="left:82.3px;top:290.58px;font-family:'Liberation Mono',monospace;font-weight:bold;font-size:13px;letter-spacing:0.03px;line-height:16px;color:#1e1e1e;white-space:pre;transform:scaleY(1.1);transform-origin:0 11.46px">xlabel(<span style="color:#a628e6">&#x27;m&#x27;</span>);</div>
</div>
<div class="a" style="left:118.5px;top:262px;width:8.5px;height:7px;background:#fafafa;border:1px solid #c4c4c4"></div>
<div class="a" style="left:120.5px;top:265px;width:4.5px;height:1px;background:#8a8a8a;"></div>
<div class="a" style="left:122.5px;top:269px;width:1px;height:13px;background:#c8c8c8;"></div>
<div class="a" style="left:122.5px;top:282px;width:4.5px;height:1px;background:#c8c8c8;"></div>
<div class="a" style="left:118.5px;top:411.5px;width:8.5px;height:7px;background:#fafafa;border:1px solid #c4c4c4"></div>
<div class="a" style="left:120.5px;top:414.5px;width:4.5px;height:1px;background:#8a8a8a;"></div>
<div class="a" style="left:122.5px;top:418.5px;width:1px;height:30.5px;background:#c8c8c8;"></div>
<div class="a" style="left:122.5px;top:449px;width:4.5px;height:1px;background:#c8c8c8;"></div>
<div class="a" style="left:66px;top:505.5px;width:1009px;height:9px;background:#f7f7f7;"></div>
<div class="a" style="left:66px;top:505.5px;width:1009px;height:1px;background:#e0e0e0;"></div>
<div class="a" style="left:566px;top:510px;width:10px;height:1px;background:#d8d8d8;"></div>
<div class="a" style="left:66px;top:514.5px;width:1008px;height:150.8px;background:#fdfdfd;border:1px solid #7088aa;border-left-color:#aabbd0"></div>
<div class="a" style="left:67.6px;top:515.5px;width:1005.4px;height:12px;background:#1d497d;"></div>
<div class="a" style="left:71.40px;top:515.53px;font-family:'Liberation Sans',sans-serif;font-weight:normal;font-size:10px;line-height:12.00px;color:#f4f6fa;white-space:pre;transform:scaleX(1.0429);transform-origin:0 0;">Command Window</div>
<svg class="a" style="left:1057px;top:516px;" width="11" height="11" viewBox="0 0 11 11"><circle cx="5.5" cy="5.5" r="4.4" stroke="#f0f0f0" stroke-width="1" fill="none"/><path d="M3.4 4.4h4.2l-2.1 2.7z" fill="#f0f0f0"/></svg>
<div class="a" style="left:67.6px;top:527.5px;width:21px;height:137px;background:#f2f2f2;"></div>
<div class="a" style="left:1063px;top:527.5px;width:10px;height:137px;background:#f7f7f7;border-left:1px solid #e4e4e4"></div>
<div class="a" style="left:1066px;top:642.5px;width:5px;height:11px;background:#c2c2c2;border-radius:2.5px"></div>
<div class="a" style="left:88.6px;top:655.5px;width:974.4px;height:9px;background:#f7f7f7;border-top:1px solid #e6e6e6"></div>
<div class="a" style="left:89.3px;top:657.7px;width:706px;height:5px;background:#c6c6c6;border-radius:2.5px"></div>
<div class="a" style="left:110.3px;top:536.74px;font-family:'Liberation Mono',monospace;font-weight:bold;font-size:16px;line-height:20px;color:#111;white-space:pre;transform:scaleY(1.08);transform-origin:0 14.26px">Column 51</div>
<div class="a" style="left:119.9px;top:576.74px;font-family:'Liberation Mono',monospace;font-weight:bold;font-size:16px;line-height:20px;color:#111;white-space:pre;transform:scaleY(1.08);transform-origin:0 14.26px">–0.0000</div>
<div class="a" style="left:91.2px;top:617.14px;font-family:'Liberation Mono',monospace;font-weight:bold;font-size:16px;line-height:20px;color:#111;white-space:pre;transform:scaleY(1.08);transform-origin:0 14.26px">&gt;&gt; figure</div>
<div class="a" style="left:91.2px;top:637.04px;font-family:'Liberation Mono',monospace;font-weight:bold;font-size:16px;line-height:20px;color:#111;white-space:pre;transform:scaleY(1.08);transform-origin:0 14.26px">&gt;&gt; plot <span style="color:#a22be6">A</span></div>
<div class="a" style="left:177.8px;top:634.5px;width:1px;height:19.5px;background:#808080;"></div>
<div class="a" style="left:72.3px;top:633.3px;font-family:'Liberation Serif',serif;font-style:italic;font-size:18.5px;line-height:20px;color:#333">fx</div>
<svg class="a" style="left:82.5px;top:651px;" width="4" height="3" viewBox="0 0 4 3"><path d="M0 0H4L2 2.5Z" fill="#444"/></svg>
<div class="a" style="left:66px;top:666px;width:1009px;height:15px;background:#ebebeb;border-radius:0 0 6px 6px"></div>
<svg class="a" style="left:452px;top:607.5px;" width="8" height="13" viewBox="0 0 8 13"><path d="M1 1V10.5L3.3 8.3L5 11.8L6.5 11.1L4.9 7.7H7.8Z" fill="#111" stroke="#fff" stroke-width=".7"/></svg>
<div class="a" style="left:971.3px;top:85.5px;width:167.5px;height:24.1px;background:#2d2e32;border:1px solid #1d1d1f"></div>
<svg class="a" style="left:978px;top:89.5px;" width="13" height="15" viewBox="0 0 13 15"><rect x="4" y="1" width="5" height="8.5" rx="2.5" fill="#8a8a8e"/><path d="M2.3 6.8 Q2.3 11 6.5 11 Q10.7 11 10.7 6.8" stroke="#8a8a8e" stroke-width="1" fill="none"/><path d="M6.5 11V13.5" stroke="#8a8a8e"/><path d="M1.5 12.8L11.5 2" stroke="#c8423a" stroke-width="1"/></svg>
<div class="a" style="left:995.5px;top:90px;width:1px;height:15px;background:#4c4d51;"></div>
<div class="a" style="left:1002.00px;top:92.50px;font-family:'Liberation Sans',sans-serif;font-weight:normal;font-size:9.3px;line-height:11.16px;color:#f0f0f0;white-space:pre;">正在讲话:</div>
<div class="a" style="left:1044.00px;top:91.83px;font-family:'Liberation Sans',sans-serif;font-weight:normal;font-size:10px;line-height:12.00px;color:#f0f0f0;white-space:pre;transform:scaleX(0.9088);transform-origin:0 0;">Piotr Breitkopf;</div>
<svg class="a" style="left:1108px;top:86px;" width="30.6" height="23" viewBox="0 0 30.6 23"><path d="M6.5 16.5 L14 7 L20 16 L26 8.5 L33 16" stroke="#48494d" stroke-width="6.6" stroke-linecap="round" stroke-linejoin="round" fill="none"/></svg>
<div class="a" style="left:4px;top:666.2px;width:134px;height:14.8px;background:rgba(0,0,0,0.66);border-radius:0 3px 0 0"></div>
<svg class="a" style="left:8px;top:668px;" width="8" height="12" viewBox="0 0 8 12"><rect x="2" y="0.3" width="4" height="6.7" rx="2" fill="#ececec"/><path d="M0.8 5 Q0.8 8.8 4 8.8 Q7.2 8.8 7.2 5" stroke="#ececec" stroke-width=".9" fill="none"/><path d="M4 8.8V11" stroke="#ececec" stroke-width=".9"/></svg>
<svg class="a" style="left:19px;top:669px;" width="11" height="9" viewBox="0 0 11 9"><rect x="0.3" y="0.3" width="10.4" height="6.6" rx=".8" fill="#ececec"/><rect x="3" y="7.6" width="5" height="1.3" fill="#ececec"/><path d="M3.6 4.8L5.5 2.6L7.4 4.8" stroke="#3b3c40" stroke-width=".9" fill="none"/></svg>
<div class="a" style="left:32.50px;top:669.06px;font-family:'Liberation Sans',sans-serif;font-weight:normal;font-size:8.6px;line-height:10.32px;color:#e0e0e0;white-space:pre;transform:scaleX(1.0775);transform-origin:0 0;">Piotr Breitkopf</div>
<div class="a" style="left:90.50px;top:669.25px;font-family:'Liberation Sans',sans-serif;font-weight:normal;font-size:8.4px;line-height:10.08px;color:#e0e0e0;white-space:pre;">的屏幕共享</div></body></html>
